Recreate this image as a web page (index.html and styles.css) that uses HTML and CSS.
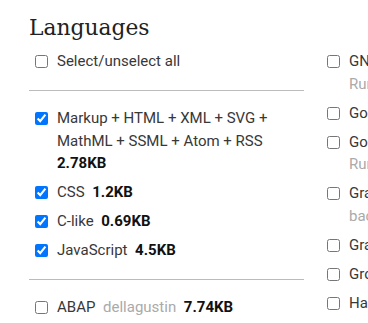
FILE: index.html
```html
<!DOCTYPE html>
<html lang="en">
<head>
<meta charset="utf-8">
<title>Languages</title>
<link rel="stylesheet" href="styles.css">
</head>
<body>
<section class="options">
  <h2 class="heading">Languages</h2>
  <div class="cols">
    <div class="col">
      <label class="item"><input type="checkbox"><span class="text">Select/unselect all</span></label>
      <hr class="sep">
      <label class="item"><input type="checkbox" checked><span class="text">Markup + HTML + XML + SVG + MathML + SSML + Atom + RSS&ensp;<strong class="size">2.78KB</strong></span></label>
      <label class="item"><input type="checkbox" checked><span class="text">CSS&ensp;<strong class="size">1.2KB</strong></span></label>
      <label class="item"><input type="checkbox" checked><span class="text">C-like&ensp;<strong class="size">0.69KB</strong></span></label>
      <label class="item"><input type="checkbox" checked><span class="text">JavaScript&ensp;<strong class="size">4.5KB</strong></span></label>
      <hr class="sep">
      <label class="item"><input type="checkbox"><span class="text">ABAP&ensp;<span class="owner">dellagustin</span>&ensp;<strong class="size">7.74KB</strong></span></label>
    </div>
    <div class="col">
      <label class="item"><input type="checkbox"><span class="text">GNU Linker Script and GN build files&ensp;<span class="owner">RunDevelopment</span>&ensp;<strong class="size">0.48KB</strong></span></label>
      <label class="item"><input type="checkbox"><span class="text">Go&ensp;<span class="owner">arnehormann</span>&ensp;<strong class="size">0.92KB</strong></span></label>
      <label class="item"><input type="checkbox"><span class="text">Go module (go.mod and go.sum)&ensp;<span class="owner">RunDevelopment</span>&ensp;<strong class="size">0.67KB</strong></span></label>
      <label class="item"><input type="checkbox"><span class="text">Gradle build scripts and settings&ensp;<span class="owner">backpackerhh</span>&ensp;<strong class="size">1.45KB</strong></span></label>
      <label class="item"><input type="checkbox"><span class="text">GraphQL&ensp;<span class="owner">Golmote</span>&ensp;<strong class="size">1.58KB</strong></span></label>
      <label class="item"><input type="checkbox"><span class="text">Groovy&ensp;<span class="owner">robfletcher</span>&ensp;<strong class="size">1.3KB</strong></span></label>
      <label class="item"><input type="checkbox"><span class="text">Haml&ensp;<span class="owner">Golmote</span>&ensp;<strong class="size">2.1KB</strong></span></label>
    </div>
  </div>
</section>
</body>
</html>
```

FILE: styles.css
```css
html, body {
  margin: 0;
  padding: 0;
  overflow: hidden;
  background: #ffffff;
}

body {
  font-family: Roboto, "Liberation Sans", Arial, sans-serif;
  font-size: 15px;
  line-height: 22.5px;
  color: #383838;
}

.options {
  padding-left: 29px;
  width: 700px;
}

.heading {
  margin: 0;
  padding-top: 15px;
  font-family: "DejaVu Serif", "Liberation Serif", serif;
  font-weight: normal;
  font-size: 21.8px;
  line-height: 26px;
  color: #222222;
}

.cols {
  display: grid;
  grid-template-columns: 275px 275px;
  column-gap: 17px;
  margin-top: 6px;
}

.col {
  display: flex;
  flex-direction: column;
}

.item {
  display: flex;
  align-items: flex-start;
  padding: 3.25px 0;
}

.item input {
  flex: none;
  width: 13px;
  height: 13px;
  margin: 5px 9px 0 6px;
}

.text {
  flex: 1;
}

.owner {
  color: #aaaaaa;
}

.size {
  font-weight: bold;
  color: #111111;
}

.sep {
  margin: 13.5px 0;
  border: 0;
  border-top: 1px solid #bbbbbb;
  height: 0;
}
```
